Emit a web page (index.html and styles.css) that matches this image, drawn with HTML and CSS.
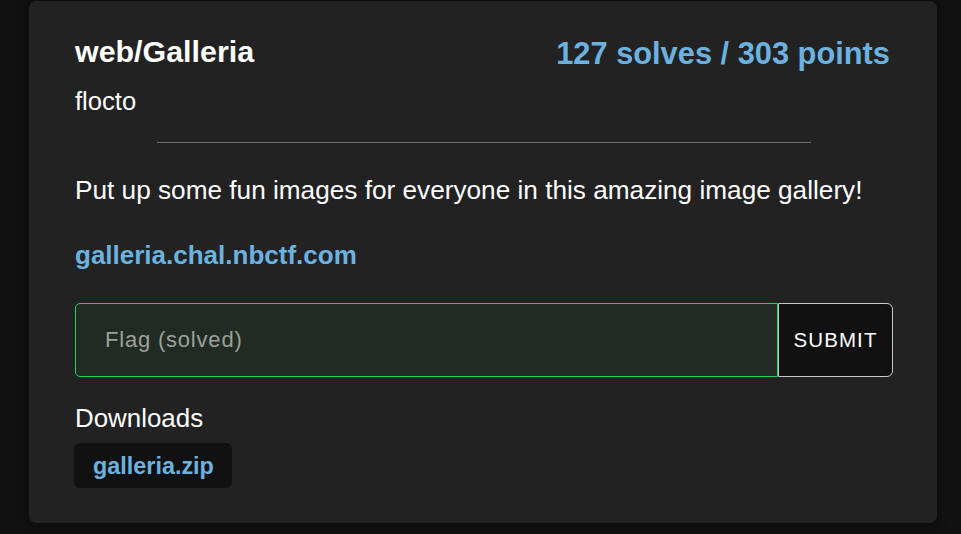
FILE: index.html
```html
<!DOCTYPE html>
<html lang="en">
<head>
<meta charset="utf-8">
<title>web/Galleria</title>
<link rel="stylesheet" href="styles.css">
</head>
<body>
<main class="page">
  <section class="card">
    <div class="head">
      <h1 class="title">web/Galleria</h1>
      <div class="stats">127 solves / 303 points</div>
    </div>
    <div class="author">flocto</div>
    <hr class="divider">
    <p class="desc">Put up some fun images for everyone in this amazing image gallery!</p>
    <a class="link" href="#">galleria.chal.nbctf.com</a>
    <form class="flag-form">
      <input class="flag-input" type="text" placeholder="Flag (solved)">
      <button class="submit" type="button">SUBMIT</button>
    </form>
    <div class="downloads-label">Downloads</div>
    <a class="download" href="#">galleria.zip</a>
  </section>
</main>
</body>
</html>
```
FILE: styles.css
```css
html, body {
  margin: 0;
  padding: 0;
  background: #111111;
  font-family: "Liberation Sans", Arial, sans-serif;
  color: #ffffff;
}

.page {
  padding: 1px 24px 11px 29px;
  min-height: 534px;
  box-sizing: border-box;
}

.card {
  width: 908px;
  box-sizing: border-box;
  background: #222222;
  border-radius: 7px;
  padding: 32px 44px 35px 46px;
  box-shadow: 0 0 12px rgba(0, 0, 0, 0.55);
  display: flex;
  flex-direction: column;
  align-items: flex-start;
}

.head {
  display: flex;
  justify-content: space-between;
  align-items: flex-start;
  align-self: stretch;
}

.title {
  margin: 0;
  font-size: 30.4px;
  line-height: 36px;
  font-weight: 700;
  color: #ffffff;
}

.stats {
  margin-top: 3px;
  padding-right: 3px;
  font-size: 30.8px;
  line-height: 36px;
  font-weight: 700;
  color: #6cb2e0;
}

.author {
  margin-top: 14px;
  font-size: 25.6px;
  line-height: 30px;
}

.divider {
  align-self: center;
  width: 80%;
  margin: 26px 0 0 0;
  border: 0;
  height: 1px;
  background: #6f6f6f;
}

.desc {
  margin: 32px 0 0 0;
  font-size: 26.2px;
  line-height: 30px;
}

.link {
  margin-top: 35px;
  font-size: 26px;
  line-height: 30px;
  font-weight: 700;
  color: #6cb2e0;
  text-decoration: none;
}

.flag-form {
  display: flex;
  align-self: stretch;
  margin: 33px 0 0 0;
  height: 74px;
}

.flag-input {
  -webkit-appearance: none;
  appearance: none;
  flex: 1;
  box-sizing: border-box;
  height: 74px;
  margin: 0;
  padding: 0 0 0 29px;
  background: #222b23;
  border: 1px solid #1fd35a;
  border-radius: 5px 0 0 5px;
  font-family: "Liberation Sans", Arial, sans-serif;
  font-size: 22px;
  letter-spacing: 0.8px;
  color: #ffffff;
  outline: none;
}

.flag-input::placeholder {
  color: #9aa09a;
}

.submit {
  -webkit-appearance: none;
  appearance: none;
  width: 115px;
  box-sizing: border-box;
  height: 74px;
  margin: 0;
  padding: 0;
  background: #111111;
  border: 1px solid #c9c9c9;
  border-radius: 0 6px 6px 0;
  color: #ffffff;
  font-family: "Liberation Sans", Arial, sans-serif;
  font-size: 20.5px;
  letter-spacing: 1.1px;
}

.downloads-label {
  margin-top: 26px;
  font-size: 25.9px;
  line-height: 30px;
}

.download {
  margin-top: 10px;
  width: 158px;
  height: 45px;
  box-sizing: border-box;
  padding: 8px 0 0 19px;
  background: #111111;
  border-radius: 6px;
  font-size: 23.4px;
  line-height: 30px;
  font-weight: 700;
  color: #6cb2e0;
  text-decoration: none;
  margin-left: -1px;
}
```
